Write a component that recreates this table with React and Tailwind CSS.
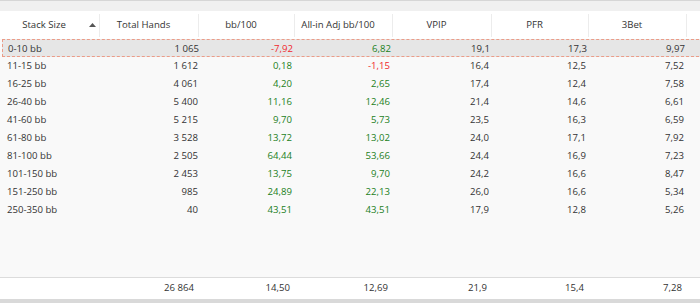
const rows = [
  ['0-10 bb', '1 065', '-7,92', '6,82', '19,1', '17,3', '9,97'],
  ['11-15 bb', '1 612', '0,18', '-1,15', '16,4', '12,5', '7,52'],
  ['16-25 bb', '4 061', '4,20', '2,65', '17,4', '12,4', '7,58'],
  ['26-40 bb', '5 400', '11,16', '12,46', '21,4', '14,6', '6,61'],
  ['41-60 bb', '5 215', '9,70', '5,73', '23,5', '16,3', '6,59'],
  ['61-80 bb', '3 528', '13,72', '13,02', '24,0', '17,1', '7,92'],
  ['81-100 bb', '2 505', '64,44', '53,66', '24,4', '16,9', '7,23'],
  ['101-150 bb', '2 453', '13,75', '9,70', '24,2', '16,6', '8,47'],
  ['151-250 bb', '985', '24,89', '22,13', '26,0', '16,6', '5,34'],
  ['250-350 bb', '40', '43,51', '43,51', '17,9', '12,8', '5,26'],
];

const headers = ['Stack Size', 'Total Hands', 'bb/100', 'All-in Adj bb/100', 'VPIP', 'PFR', '3Bet'];
const totals = ['', '26 864', '14,50', '12,69', '21,9', '15,4', '7,28'];

const cols = 'grid grid-cols-[100px_99px_96px_98px_99px_97px_98px]';

// win-rate columns are coloured by sign
const tone = (i, v) => {
  if (i !== 2 && i !== 3) return 'text-[#333]';
  return v.startsWith('-') ? 'text-[#f0282c]' : 'text-[#1b7f1b]';
};

export default function App() {
  return (
    <div className="w-[700px] h-[303px] bg-[#f9f9f9] flex flex-col text-[9.6px] font-['Open_Sans',sans-serif] overflow-hidden">
      <div className="h-[11px] bg-[#f0f0f0] border-t border-[#d6d6d6]" />

      <div className={`${cols} h-[28px] bg-white text-[#333]`}>
        {headers.map((h, i) => (
          <div key={h} className="relative flex items-center">
            <div className="flex-1 pr-[12px] text-center">{h}</div>
            {i === 0 && (
              <svg width="7" height="4" viewBox="0 0 7 4" className="absolute left-[89px] top-[12px]">
                <path d="M3.5 0L7 4H0z" fill="#555" />
              </svg>
            )}
            <div className="absolute right-0 top-[3px] bottom-[2px] w-px bg-[#ececec]" />
          </div>
        ))}
      </div>

      <div className="h-[238px] flex flex-col">
        {rows.map((r, ri) => (
          <div
            key={r[0]}
            className={`${cols} h-[18px] items-center leading-[18px] ml-[2px] ${
              ri === 0 ? '-mr-[4px] bg-[#e6e6e6] border border-dashed border-[#eb9c88]' : ''
            }`}
          >
            {r.map((v, i) => (
              <div
                key={i}
                className={`${i === 0 ? 'text-left pl-[5px]' : 'text-right pr-[5px]'} ${i === 1 ? '-mr-[2px]' : ''} ${tone(i, v)}`}
              >
                {v}
              </div>
            ))}
          </div>
        ))}
      </div>

      <div className={`${cols} h-[22px] bg-white border-t border-[#dcdcdc] items-center text-[#333]`}>
        {totals.map((v, i) => (
          <div key={i} className="text-right pr-[5px]">{v}</div>
        ))}
      </div>
      <div className="h-[4px] bg-[#d9d9d9]" />
    </div>
  );
}
